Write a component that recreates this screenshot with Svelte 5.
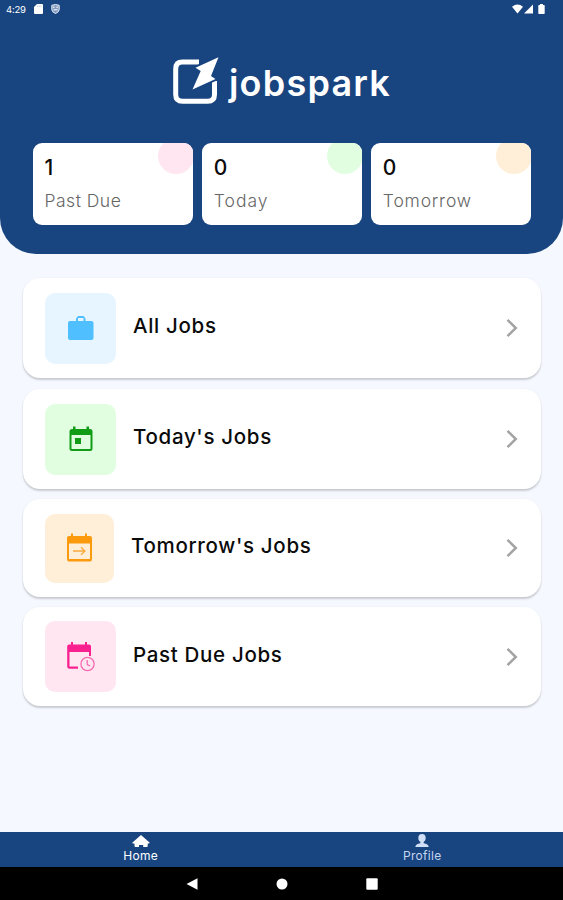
<script>
  const stats = [
    { value: 1, label: 'Past Due', color: '#ffe6f1', spacing: 0.5 },
    { value: 0, label: 'Today', color: '#e1ffe0', spacing: 1.05 },
    { value: 0, label: 'Tomorrow', color: '#ffefd8', spacing: 0.8 },
  ];
  const jobs = [
    { kind: 'all', label: 'All Jobs' },
    { kind: 'today', label: "Today's Jobs" },
    { kind: 'tomorrow', label: "Tomorrow's Jobs" },
    { kind: 'past', label: 'Past Due Jobs' },
  ];
</script>

<div class="screen">
  <header>
    <div class="status">
      <span class="time">4:29</span>
      <svg class="sd" width="9" height="10" viewBox="0 0 9 10"><path d="M3 0h5q1 0 1 1v8q0 1-1 1H1q-1 0-1-1V3z" fill="#fff" /><path d="M3.5 1.5v1.6M5.2 1.5v1.6M7 1.5v1.6" stroke="#9fb4d3" stroke-width=".6" /></svg>
      <svg class="shield" width="9" height="10" viewBox="0 0 9 10"><path d="M.8 1.3 4.5.5l3.7.8v4.2q0 2.5-3.7 4-3.7-1.5-3.7-4z" fill="#8299c0" stroke="#e6edf8" /><path d="M2 3.2h1.7M5.3 3.2H7M2.5 5.8h4" stroke="#fff" /></svg>
      <svg class="signals" width="33" height="10" viewBox="0 0 33 10" fill="#fff"><path d="M0 2.8Q5.5-1.8 11 2.8L5.5 9.5z" /><path d="M21 .5v9h-9z" /><path d="M27 1h1V0h3v1h1q.7 0 .7.7v7.6q0 .7-.7.7h-5q-.7 0-.7-.7V1.7q0-.7.7-.7z" /></svg>
    </div>
    <div class="brand">
      <svg width="46" height="50" viewBox="0 0 46 50">
        <path d="M26 6.1H9.5Q2.700 6.1 2.7 13v25.5q0 6.800 6.800 6.800h25.200q6.800 0 6.800-6.800V25" fill="none" stroke="#fff" stroke-width="5" />
        <path d="M45.500 1.200 22.500 11.800l5.200 3.200-8.200 18.500L42.500 23l-4.500-3z" fill="#fff" stroke="#184480" stroke-width="3.600" paint-order="stroke" />
      </svg>
      <span>jobspark</span>
    </div>
    <div class="stats">
      {#each stats as s}
        <div class="stat">
          <i style:background={s.color}></i>
          <b>{s.value}</b>
          <span style:letter-spacing="{s.spacing}px">{s.label}</span>
        </div>
      {/each}
    </div>
  </header>

  <main>
    {#each jobs as job}
      <div class="job {job.kind}">
        <div class="tile">
          {#if job.kind === 'all'}
            <svg width="27" height="26" viewBox="0 0 27 26"><path d="M3 6h6V3.500L11 1h5.500l2 2.500V6h6q2 0 2 2v15q0 2-2 2H3q-2 0-2-2V8q0-2 2-2zm8 0h5.500V3H11z" fill="#4fbfff" fill-rule="evenodd" /></svg>
          {:else if job.kind === 'today'}
            <svg width="24" height="26" viewBox="0 0 24 26"><path d="M3 3h1V.5h2.500V3h11V.5H20V3h1q2.500 0 2.500 2.500v17Q23.500 25 21 25H3Q.5 25 .5 22.500v-17Q.5 3 3 3zm-.5 6v14h19V9zm3.500 3h6v6H6z" fill="#119b17" fill-rule="evenodd" /></svg>
          {:else if job.kind === 'tomorrow'}
            <svg width="27" height="30" viewBox="0 0 27 30"><path d="M3 3h2V.5h2V3h12V.5h2V3h3q2 0 2 2v21q0 2.500-2 2.500H3Q1 28.500 1 26V5q0-2 2-2zm0 7.500v15.500h21V10.500z" fill="#fb9a0c" fill-rule="evenodd" /><path d="M7 18h12M15 14.200l4 3.800-4 3.800" fill="none" stroke="#fbaa3d" stroke-width="1.300" /></svg>
          {:else}
            <svg width="30" height="31" viewBox="0 0 30 31"><path d="M3 3.500h2V1h2v2.500h12V1h2v2.500h2q2 0 2 2V15h-2v-4H3.500v14.500H12v2.300H3.500q-2.300 0-2.300-2.300v-20q0-2 1.800-2z" fill="#f92090" /><circle cx="21.500" cy="23" r="6.600" fill="#ffe6f1" stroke="#f66bb2" stroke-width="1.300" /><path d="M21.200 19v4.500l3 1.500" fill="none" stroke="#f66bb2" stroke-width="1.300" /></svg>
          {/if}
        </div>
        <span class="label">{job.label}</span>
        <svg class="chevron" width="12" height="20" viewBox="0 0 12 20"><path d="m1.500 1.800 8.300 8.200-8.300 8.200" fill="none" stroke="#a3a3a3" stroke-width="2.500" /></svg>
      </div>
    {/each}
  </main>

  <nav class="tabs">
    <div class="tab">
      <svg width="18" height="14" viewBox="0 0 18 14"><path d="M9 1 17.500 8.500q.6 1-.8 1h-1v2.500q0 1-1 1h-3.500v-2H7v2H3.500q-1 0-1-1V9.500h-1q-1.600 0-1-1z" fill="#fff" /></svg>
      <span>Home</span>
    </div>
    <div class="tab profile">
      <svg width="14" height="14" viewBox="0 0 14 14" fill="#d0dff5"><ellipse cx="7" cy="4" rx="3.700" ry="4" /><path d="M5.300 7h3.400v2.300q4.600.5 5 3.700H.3q.4-3.200 5-3.700z" /></svg>
      <span>Profile</span>
    </div>
  </nav>
  <div class="system">
    <svg width="12" height="12" viewBox="0 0 12 12"><path d="M.5 6 11.500.3v11.400z" fill="#fff" /></svg>
    <svg width="12" height="12" viewBox="0 0 12 12"><circle cx="6" cy="6" r="5.500" fill="#fff" /></svg>
    <svg width="12" height="12" viewBox="0 0 12 12"><rect x=".3" y=".3" width="11.400" height="11.400" rx="1" fill="#fff" /></svg>
  </div>
</div>

<style>
  .screen { width: 563px; height: 900px; display: flex; flex-direction: column; background: #f5f9ff; font-family: Inter, 'Open Sans', sans-serif; color: #0b0b0b; overflow: hidden; }
  svg { display: block; flex: none; }
  header { height: 254px; flex: none; background: #184480; border-radius: 0 0 36px 36px; box-sizing: border-box; }
  .status { height: 18px; display: flex; align-items: center; padding: 0 18px 0 6px; color: #fff; }
  .time { width: 28px; font-size: 9.5px; letter-spacing: -0.2px; }
  .shield { margin-left: 8px; }
  .signals { margin-left: auto; }
  .brand { height: 50px; margin: 38px 0 0 173px; display: flex; color: #fff; }
  .brand span { margin-left: 10px; font: 600 36px/50px Inter, sans-serif; letter-spacing: 1.200px; padding-top: 2px; }
  .stats { display: flex; gap: 9px; margin: 37px 32px 0 32.5px; }
  .stat { position: relative; flex: 1; height: 82px; box-sizing: border-box; padding: 13px 0 0 12px; border-radius: 9px; background: #fff; overflow: hidden; display: flex; flex-direction: column; }
  .stat i { position: absolute; right: -1px; top: -5px; width: 36px; height: 36px; border-radius: 50%; }
  .stat b { font-size: 21px; line-height: 24px; font-weight: 500; }
  .stat span { margin-top: 9px; font-size: 17.5px; line-height: 24px; font-weight: 300; color: #666; white-space: nowrap; }
  main { flex: 1; padding: 24px 22.5px 0 23px; display: flex; flex-direction: column; gap: 10px; }
  .job { height: 100px; box-sizing: border-box; padding: 0 23px 0 22px; display: flex; align-items: center; background: #fff; border-radius: 17px; box-shadow: 0 2px 2px #0000002e, 0 0 2px #0000000d; }
  .today { margin-top: 1px; }
  .tomorrow { height: 98px; }
  .past { height: 99px; }
  .tile { width: 71px; height: 71px; border-radius: 10px; display: flex; align-items: center; justify-content: center; }
  .all .tile { background: #e6f5ff; }
  .today .tile { background: #e1ffe0; }
  .tomorrow .tile { background: #ffefd8; width: 69px; height: 69px; }
  .past .tile { background: #ffe6f1; }
  .label { margin: -4px 0 0 17px; font-size: 20.5px; line-height: 28px; font-weight: 500; letter-spacing: 0.68px; white-space: nowrap; }
  .chevron { margin-left: auto; }
  .tabs { height: 35px; flex: none; display: flex; background: #184480; color: #fff; }
  .tab { flex: 1; display: flex; flex-direction: column; align-items: center; padding-top: 2px; }
  .tab span { margin-top: 0.5px; font-size: 12px; line-height: 14px; letter-spacing: 0.3px; }
  .profile { color: #c5d6f0; }
  .system { height: 33px; flex: none; background: #000; display: flex; align-items: center; justify-content: center; gap: 78px; }
</style>
